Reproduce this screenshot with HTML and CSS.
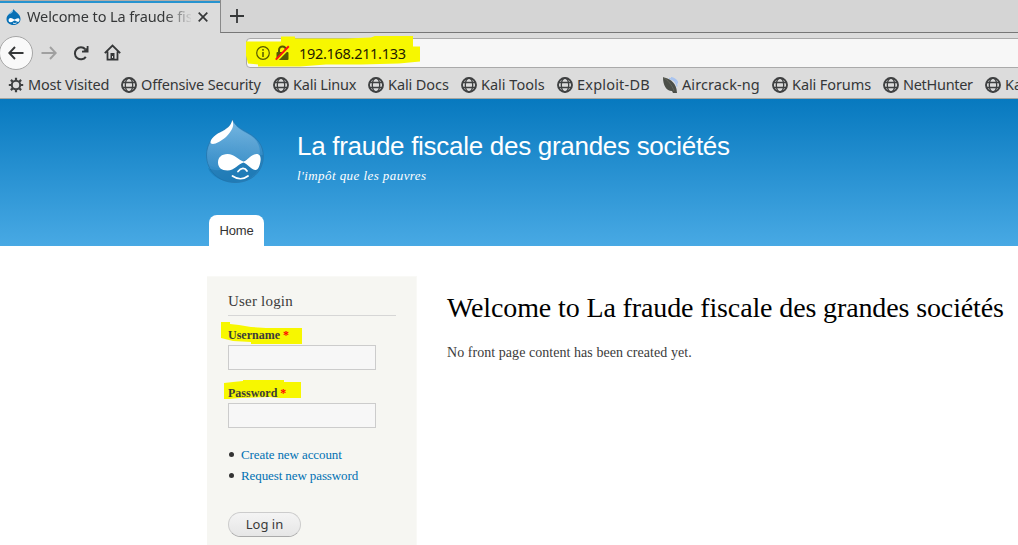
FILE: index.html
```html
<!DOCTYPE html>
<html lang="fr">
<head>
<meta charset="utf-8">
<title>Welcome to La fraude fiscale des grandes sociétés</title>
<link rel="stylesheet" href="styles.css">
</head>
<body>
<svg class="defs" width="0" height="0" aria-hidden="true">
  <defs>
    <symbol id="globe" viewBox="0 0 16 16"><g fill="none" stroke="#3f4142"><circle cx="8" cy="8" r="7" stroke-width="1.900"/><ellipse cx="8" cy="8" rx="3.700" ry="7" stroke-width="1.300"/><path d="M2 5.500h12M2 10.500h12" stroke-width="1.300"/></g></symbol>
    <linearGradient id="dropFill" x1="0" y1="0" x2=".25" y2="1"><stop offset="0" stop-color="#5aaade"/><stop offset=".55" stop-color="#3c92cc"/><stop offset="1" stop-color="#2a86c2"/></linearGradient>
    <linearGradient id="dropShine" x1=".9" y1="0" x2=".3" y2="1"><stop offset="0" stop-color="#fff" stop-opacity=".22"/><stop offset="1" stop-color="#fff" stop-opacity=".03"/></linearGradient>
  </defs>
</svg>
<header class="chrome">
  <div class="tabbar">
    <div class="tab">
      <svg class="favicon" width="15" height="16" viewBox="0 0 15 16"><path d="M7.700 0C8.500 3 14.500 4.500 14.500 10c0 3.500-3 6-7 6s-7-2.500-7-6C.5 5 6.800 3 7.700 0Z" fill="#0870b5"/><path d="M2 5.500C3.500 3.500 6 2.500 7 1c.5 2-2 4-5 4.500Z" fill="#8cc5e8"/><path d="M4.500 9c2 0 3 1.500 4 1.500S11 9 12.300 9.300c2 .5 1.400 3.700-.3 3.600-1.300 0-2.300-1.300-3.300-1.300s-2 1.700-4 1.700c-2.800 0-2.700-4.300-.2-4.300Z" fill="#fff"/><path d="M7 14c1 .7 2.500.6 3.500-.1" fill="none" stroke="#fff"/></svg>
      <span class="tab-title">Welcome to La fraude fisc</span>
      <svg class="close" width="10" height="10" viewBox="0 0 10 10"><path d="M.7.7l8.600 8.600M9.300.7L.7 9.300" stroke="#353738" stroke-width="1.700"/></svg>
    </div>
    <div class="newtab"><svg width="14" height="14" viewBox="0 0 14 14"><path d="M7 0v14M0 7h14" stroke="#353738" stroke-width="1.800"/></svg></div>
  </div>
  <div class="navbar">
    <div class="back"><svg width="16" height="14" viewBox="0 0 16 14"><path d="M15.500 7H1.500M7 1L1.300 7 7 13" fill="none" stroke="#353738" stroke-width="1.900"/></svg></div>
    <svg class="forward" width="16" height="14" viewBox="0 0 16 14"><path d="M.5 7h14M9 1l5.700 6L9 13" fill="none" stroke="#a0a0a0" stroke-width="1.900"/></svg>
    <svg class="reload" width="16" height="16" viewBox="0 0 16 16"><path d="M12.800 11.800A6 6 0 1 1 12.300 4.200" fill="none" stroke="#353738" stroke-width="2"/><path d="M15.500 1v6.500H9V5.700L11 5.500 13.700 3V1Z" fill="#353738"/></svg>
    <svg class="home" width="17" height="17" viewBox="0 0 17 17"><path d="M.8 9.200L8.500 1.500l7.700 7.700M3.500 7.500v8.200h10V7.500" fill="none" stroke="#353738" stroke-width="1.800"/><path d="M6.500 16V9h4v7Z" fill="#353738"/><path d="M8 12h1v2H8z" fill="#ddd"/></svg>
    <div class="urlbar">
      <i class="mark mark-url"></i>
      <svg class="info" width="14" height="14" viewBox="0 0 14 14"><circle cx="7" cy="7" r="6.300" fill="none" stroke="#565800" stroke-width="1.200"/><path d="M7 6v5M7 3v1.700" stroke="#565800" stroke-width="1.500"/></svg>
      <svg class="lock" width="15" height="16" viewBox="0 0 15 16"><path d="M4 8V5a3.500 3.500 0 0 1 7 0v3" fill="none" stroke="#565800" stroke-width="2"/><rect x="1.500" y="7" width="12" height="8" rx="1" fill="#565800"/><path d="M2 15.500L15 2.200" stroke="#f7f700" stroke-width="2"/><path d="M.8 14.600L13.800 1.300" stroke="#f11" stroke-width="2"/></svg>
      <span class="address">192.168.211.133</span>
    </div>
  </div>
  <nav class="bookmarks">
    <a class="bm visited"><svg width="16" height="16" viewBox="0 0 16 16"><g fill="none" stroke="#3f4142"><circle cx="8" cy="8" r="4.200" stroke-width="2"/><path d="M8 .8v3M8 12.200v3M.8 8h3M12.200 8h3M2.900 2.900L5 5M11 11l2.100 2.100M2.900 13.100L5 11M11 5l2.100-2.100" stroke-width="2.200"/></g></svg><span>Most Visited</span></a>
    <a class="bm security"><svg width="16" height="16"><use href="#globe"/></svg><span>Offensive Security</span></a>
    <a class="bm linux"><svg width="16" height="16"><use href="#globe"/></svg><span>Kali Linux</span></a>
    <a class="bm docs"><svg width="16" height="16"><use href="#globe"/></svg><span>Kali Docs</span></a>
    <a class="bm"><svg width="16" height="16"><use href="#globe"/></svg><span>Kali Tools</span></a>
    <a class="bm exploit"><svg width="16" height="16"><use href="#globe"/></svg><span>Exploit-DB</span></a>
    <a class="bm aircrack"><svg width="16" height="16" viewBox="0 0 16 16"><path d="M7 1.500c5 .5 7.500 4 8 8M9 .5c4 .8 6 3 7 6" fill="none" stroke="#a9c4ef" stroke-width="1.300"/><path d="M1 .5C7 1 13 5 14.500 12L15 16h-4l-1-2C4 14 1 8 1 .5Z" fill="#4c4f48"/><path d="M1 .5C6 3 10 8 12 14" fill="none" stroke="#63665c"/></svg><span>Aircrack-ng</span></a>
    <a class="bm docs"><svg width="16" height="16"><use href="#globe"/></svg><span>Kali Forums</span></a>
    <a class="bm nethunter"><svg width="16" height="16"><use href="#globe"/></svg><span>NetHunter</span></a>
    <a class="bm"><svg width="16" height="16"><use href="#globe"/></svg><span>Ka</span></a>
  </nav>
</header>
<section class="banner">
  <div class="brand">
    <svg class="logo" width="58" height="65" viewBox="0 0 58 65">
      <path d="M26.500 .5C29 7 35 10 42 14c10 5.500 15.300 13 15.300 23C57.300 53 45 63.500 29 63.500S.5 52 .5 36C.5 26 6 18 13 13.500 19 10 25.500 7 26.500 .5Z" fill="url(#dropFill)" stroke="#2476ad" stroke-width=".8"/>
      <path d="M28 4c3 5 8 8 14 11 12 6 14 18 10 24C37 42 18 56 2 45-1 32 3 20 14 15 20 12 27 9 28 4Z" fill="url(#dropShine)"/>
      <path d="M2 49c8 4 17 2 27-3 10-5 19-10 28-10-.5 17-13 27-28 27C15 63 5 57 2 49Z" fill="#116ba6" opacity=".4"/>
      <path d="M26.300 1C29 6 26 12 20 18 14 23 8 26 5 24.500 3 22 8 16 14 13.500 21 10 25 7 26.300 1Z" fill="#fff"/>
      <path d="M21.500 35c7 0 11 6 16 7.500 4-1 8-7.500 13-7.500 4 0 4.500 4 4 7-.5 4-2 9-5 9-4 0-8-6-12-7.500-5 1-9 8-16 8-6 0-9.500-3-9.500-8s3.500-8.500 9.500-8.500Z" fill="#fff"/>
      <path d="M32 52.500c3-4 7-4 9-.5M26.500 57c5 3.500 11 3.500 15.500 0" fill="none" stroke="#fff" stroke-width="1.800" stroke-linecap="round"/>
    </svg>
    <div class="names">
      <div class="site-name">La fraude fiscale des grandes sociétés</div>
      <div class="slogan">l'impôt que les pauvres</div>
    </div>
  </div>
  <a class="menu-tab">Home</a>
</section>
<div class="page">
  <aside class="sidebar">
    <h2>User login</h2>
    <form>
      <label class="user"><i class="mark mark-user"></i><span>Username <b>*</b></span></label>
      <input type="text">
      <label class="pass"><i class="mark mark-pass"></i><span>Password <b>*</b></span></label>
      <input type="password">
      <ul>
        <li><a>Create new account</a></li>
        <li><a>Request new password</a></li>
      </ul>
      <button type="button">Log in</button>
    </form>
  </aside>
  <main>
    <h1>Welcome to La fraude fiscale des grandes sociétés</h1>
    <p>No front page content has been created yet.</p>
  </main>
</div>
</body>
</html>
```
FILE: styles.css
```css
* { box-sizing: border-box; }
body { margin: 0; height: 545px; overflow: hidden; background: #fff; font-family: "Liberation Serif", serif; color: #3b3b3b; }
.defs { position: absolute; }
.chrome { height: 99px; background: #dcdcdc; border-bottom: 1px solid #a6a6a0; font: 14.5px/20px "Noto Sans", sans-serif; color: #353738; overflow: hidden; }
.tabbar { display: flex; height: 33px; }
.tab { display: flex; align-items: center; width: 220px; padding: 1px 0 0 6px; border-top: 1px solid #b0aca8; box-shadow: inset 0 2px #2693cf; }
.favicon { margin-top: -2px; }
.close { margin-top: -1px; }
.tab-title { width: 164px; margin: -3px 7px 0 6px; overflow: hidden; white-space: nowrap; letter-spacing: -.1px; -webkit-mask-image: linear-gradient(to right, #000 138px, transparent 166px); mask-image: linear-gradient(to right, #000 138px, transparent 166px); }
.newtab { flex: 1; padding: 9px 0 0 9px; border-left: 1px solid #898989; border-bottom: 1px solid #777; background: #d5d5d5; }
.newtab svg { display: block; }
.navbar { display: flex; align-items: center; height: 39px; }
.back { display: flex; align-items: center; justify-content: center; flex: none; width: 34px; height: 34px; margin-left: -1px; border: 1px solid #a6a6a6; border-radius: 50%; background: #f9f9f9; }
.navbar svg { flex: none; }
.forward { margin-left: 8px; }
.reload { margin-left: 16px; }
.home { margin-left: 15px; }
.urlbar { position: relative; display: flex; align-items: center; flex: none; width: 780px; height: 30px; margin-left: 125px; padding-left: 9px; border: 1px solid #aaa; border-radius: 4px; background: #f7f7f7; }
.urlbar > svg, .address { position: relative; }
.lock { margin-left: 5px; }
.address { margin-left: 9px; color: #1f2000; letter-spacing: -.3px; white-space: nowrap; }
.mark { position: absolute; background: #f7f700; }
.mark-url { left: -1px; top: -3px; width: 174px; height: 32px; clip-path: polygon(0 6px,35px 6px,35px 1px,49px 1px,49px 3px,100px 3px,125px 2px,130px 0,167px 0,167px 11px,174px 11px,174px 26px,153px 28px,115px 29px,80px 29px,54px 31px,12px 31px,12px 29px,2px 28px,0 20px); }
.bookmarks { display: grid; grid-template-columns: 113px 152px 95px 93px 96px 105px 110px 111px 102px 40px; align-items: center; height: 26px; padding-left: 8px; }
.bm { display: flex; align-items: center; gap: 4px; white-space: nowrap; }
.bm span { margin-top: -2px; }
.visited, .security { letter-spacing: -.18px; }
.linux { letter-spacing: -.2px; }
.docs { letter-spacing: -.1px; }
.exploit { letter-spacing: .2px; }
.aircrack { letter-spacing: .1px; }
.nethunter { letter-spacing: -.3px; }
.banner { display: flex; flex-direction: column; height: 147px; padding-left: 206px; background: linear-gradient(#0779bf, #48a9e4); color: #fff; }
.brand { display: flex; height: 116px; padding-top: 20px; }
.names { padding: 11px 0 0 33px; }
.site-name { font: 26px/32px "Liberation Sans", sans-serif; letter-spacing: -.29px; white-space: nowrap; }
.slogan { font-size: 13px; line-height: 16px; font-style: italic; letter-spacing: .43px; margin-top: 6px; }
.menu-tab { width: 55px; height: 31px; margin-left: 3px; border-radius: 8px 8px 0 0; background: #fff; color: #333; font: 13px/31px "Liberation Sans", sans-serif; letter-spacing: -.15px; text-align: center; }
.page { display: flex; padding: 30px 0 0 207px; }
.sidebar { flex: none; width: 210px; height: 269px; padding: 16px 20px 0 21px; background: #f6f6f2; border: 1px solid #f9f9f6; border-width: 1px 1px 0 0; }
h2 { height: 23px; margin: 0 0 9px; border-bottom: 1px solid #d6d6d6; font-weight: normal; font-size: 15px; line-height: 16px; letter-spacing: .2px; }
label { position: relative; display: block; height: 20px; font-weight: bold; font-size: 12px; line-height: 20px; }
label span { position: relative; }
label b { color: #f00; }
.mark-user { left: -7px; top: -3px; width: 81px; height: 22px; clip-path: polygon(0 0,9px 0,9px 2px,18px 3px,30px 5px,45px 6px,81px 6px,81px 22px,30px 22px,30px 20px,12px 19px,0 16px); }
.mark-pass { left: -4px; top: -3px; width: 77px; height: 19px; clip-path: polygon(0 3px,9px 2px,19px 1px,19px 0,60px 0,60px 2px,77px 2px,77px 18px,56px 18px,45px 17px,16px 18px,5px 19px,0 19px); }
input { display: block; width: 148px; height: 25px; margin: 0 0 13px; border: 1px solid #ccc; background: #f7f7f7; padding: 0; }
ul { list-style: none; margin: 16px 0 26px; padding: 0; font-size: 13px; line-height: 21px; letter-spacing: -.1px; color: #0071b3; }
li { display: flex; align-items: center; gap: 7px; padding-left: 1px; }
li::before { content: ""; width: 5px; height: 5px; border-radius: 50%; background: #333; }
button { display: block; width: 73px; height: 25px; padding: 0; border: 1px solid #ccc; border-bottom-color: #aaa; border-radius: 13px; background: linear-gradient(#f4f4f4, #e6e6e6); font: 13px/21px "Noto Sans", sans-serif; color: #3a3a3a; }
main { padding-left: 30px; }
h1 { margin: 15px 0 0; font-weight: normal; font-size: 28px; line-height: 34px; letter-spacing: -.125px; color: #000; white-space: nowrap; }
p { margin: 19px 0 0; font-size: 14px; line-height: 18px; letter-spacing: .05px; }
```
